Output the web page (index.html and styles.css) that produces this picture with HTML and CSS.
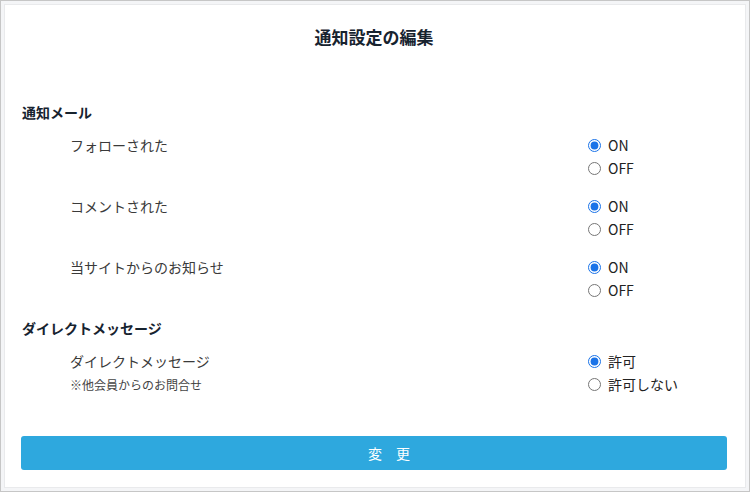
FILE: index.html
```html
<!doctype html>
<html lang="ja">
<head>
    <meta charset="UTF-8">
    <title>通知設定の編集</title>
    <link rel="stylesheet" href="styles.css">
</head>
<body>
    <div class="page">
        <form class="card">
            <h1 class="title">通知設定の編集</h1>

            <h2 class="section">通知メール</h2>
            <div class="row">
                <div class="label">フォローされた</div>
                <div class="options">
                    <label class="opt"><input type="radio" name="follow" checked> ON</label>
                    <label class="opt"><input type="radio" name="follow"> OFF</label>
                </div>
            </div>
            <div class="row">
                <div class="label">コメントされた</div>
                <div class="options">
                    <label class="opt"><input type="radio" name="comment" checked> ON</label>
                    <label class="opt"><input type="radio" name="comment"> OFF</label>
                </div>
            </div>
            <div class="row">
                <div class="label">当サイトからのお知らせ</div>
                <div class="options">
                    <label class="opt"><input type="radio" name="info" checked> ON</label>
                    <label class="opt"><input type="radio" name="info"> OFF</label>
                </div>
            </div>

            <h2 class="section">ダイレクトメッセージ</h2>
            <div class="row">
                <div class="label">
                    ダイレクトメッセージ
                    <div class="note">※他会員からのお問合せ</div>
                </div>
                <div class="options">
                    <label class="opt"><input type="radio" name="dm" checked> 許可</label>
                    <label class="opt"><input type="radio" name="dm"> 許可しない</label>
                </div>
            </div>

            <button type="button" class="submit">変　更</button>
        </form>
    </div>
</body>
</html>
```

FILE: styles.css
```css
*{
    margin: 0;
    padding: 0;
    box-sizing: border-box;
}
body{
    font-family: "Noto Sans CJK JP", "Noto Sans", sans-serif;
    color: #333333;
}
.page{
    width: 750px;
    height: 492px;
    border: 1px solid #c6c6c6;
    background-color: #f4f5f7;
    padding: 3px;
    display: flex;
}
.card{
    flex: 1;
    background-color: #ffffff;
    border: 1px solid #e9eaec;
    padding: 0 18px 0 16px;
}
.title{
    margin-top: 20px;
    font-size: 17px;
    line-height: 24px;
    font-weight: bold;
    text-align: center;
    color: #17232f;
}
.section{
    margin-top: 52px;
    font-size: 14px;
    line-height: 22px;
    font-weight: bold;
    color: #17232f;
    padding-left: 1px;
}
.section + .row{
    margin-top: 11px;
}
.row{
    display: flex;
    margin-top: 15px;
    font-size: 14px;
    line-height: 23px;
}
.row + .section{
    margin-top: 15px;
}
.label{
    flex: 1;
    padding-left: 49px;
    color: #3a3a3a;
}
.note{
    font-size: 12px;
    color: #444444;
}
.options{
    width: 139px;
    display: flex;
    flex-direction: column;
}
.opt{
    display: flex;
    align-items: center;
    gap: 7px;
    color: #222222;
}
.opt input{
    width: 13px;
    height: 13px;
    margin: 0;
    accent-color: #1a73e8;
}
.submit{
    display: block;
    width: 100%;
    height: 34px;
    margin-top: 40px;
    border: none;
    border-radius: 3px;
    background-color: #2ea8de;
    color: #ffffff;
    font-family: inherit;
    font-size: 14px;
    padding-left: 30px;
}
```
